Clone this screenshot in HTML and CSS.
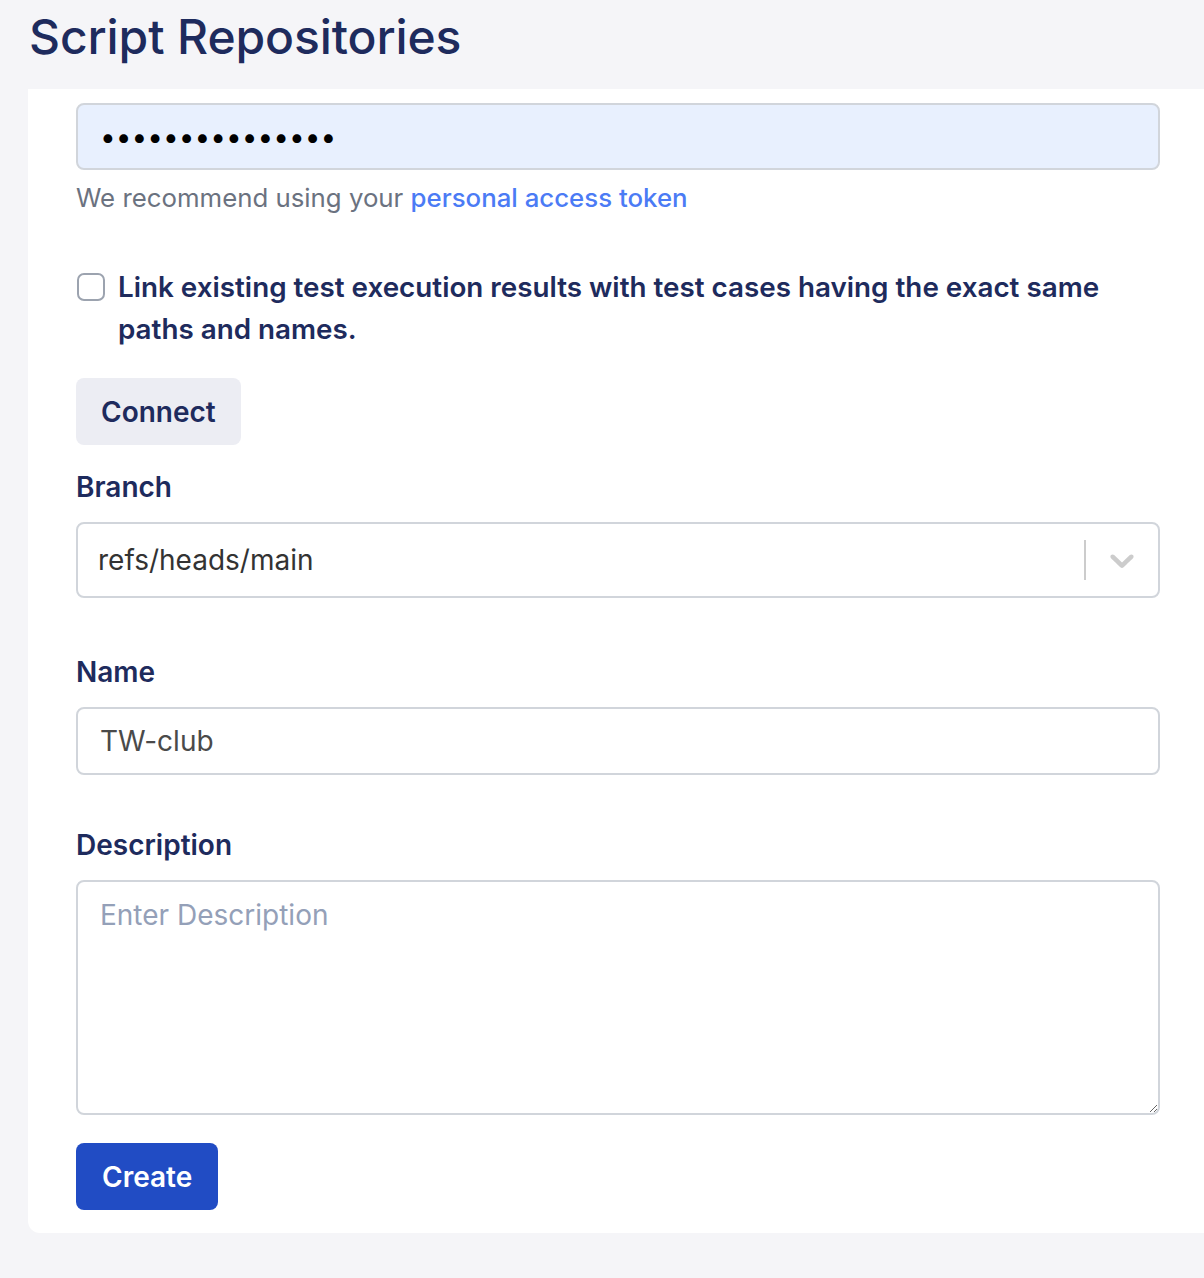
FILE: index.html
```html
<!DOCTYPE html>
<html lang="en">
<head>
<meta charset="utf-8">
<title>Script Repositories</title>
<link rel="stylesheet" href="styles.css">
</head>
<body>
<header class="page-header">
  <h1 class="page-title">Script Repositories</h1>
</header>
<main class="card">
  <form class="form">
    <input class="field field-autofill" type="password" value="abcdefghijklmno" aria-label="Token">
    <p class="helper">We recommend using your <a class="link" href="#">personal access token</a></p>

    <label class="check-row">
      <input class="check" type="checkbox">
      <span class="check-label">Link existing test execution results with test cases having the exact same paths and names.</span>
    </label>

    <button type="button" class="btn btn-secondary">Connect</button>

    <div class="label label-branch">Branch</div>
    <div class="select">
      <span class="select-value">refs/heads/main</span>
      <span class="select-sep"></span>
      <span class="select-indicator">
        <svg width="40" height="40" viewBox="0 0 20 20" aria-hidden="true"><path fill="#cccccc" d="M4.516 7.548c0.436-0.446 1.043-0.481 1.576 0l3.908 3.747 3.908-3.747c0.533-0.481 1.141-0.446 1.574 0 0.436 0.445 0.408 1.197 0 1.615-0.406 0.418-4.695 4.502-4.695 4.502-0.217 0.223-0.502 0.335-0.787 0.335s-0.57-0.112-0.789-0.335c0 0-4.287-4.084-4.695-4.502s-0.436-1.17 0-1.615z"/></svg>
      </span>
    </div>

    <div class="label label-name">Name</div>
    <input class="field field-text" type="text" value="TW-club" aria-label="Name">

    <div class="label label-desc">Description</div>
    <textarea class="field textarea" placeholder="Enter Description" aria-label="Description"></textarea>

    <button type="button" class="btn btn-primary">Create</button>
  </form>
</main>
</body>
</html>
```

FILE: styles.css
```css
html, body {
  margin: 0;
  padding: 0;
}
body {
  background: #f5f5f8;
  font-family: Inter, "Noto Sans", "Liberation Sans", sans-serif;
  overflow: hidden;
  min-height: 1278px;
}
.page-header {
  height: 89px;
  padding-left: 29px;
  box-sizing: border-box;
}
.page-title {
  margin: 0;
  padding-top: 8px;
  font-size: 48px;
  line-height: 58px;
  font-weight: 500;
  color: #1e2b5d;
  letter-spacing: -0.1px;
}
.card {
  margin-left: 28px;
  width: 1200px;
  background: #ffffff;
  border-radius: 0 0 12px 12px;
  padding: 14px 0 23px 48px;
  box-sizing: border-box;
}
.form {
  width: 1084px;
  display: flex;
  flex-direction: column;
  align-items: flex-start;
}
.field {
  width: 100%;
  box-sizing: border-box;
  border: 2px solid #d1d5db;
  border-radius: 8px;
  font-family: inherit;
  font-size: 28px;
  margin: 0;
  outline: none;
}
.field-autofill {
  height: 67px;
  background: #e8f0fe;
  padding: 0 22px;
  color: #000;
  font-size: 28px;
  letter-spacing: 0;
}
.helper {
  margin: 8px 0 0;
  font-size: 25.8px;
  line-height: 40px;
  color: #6b7280;
}
.link {
  color: #4b7bf5;
  text-decoration: none;
  font-weight: 500;
}
.check-row {
  margin-top: 48px;
  display: flex;
  align-items: flex-start;
  gap: 13px;
}
.check {
  appearance: none;
  -webkit-appearance: none;
  width: 28px;
  height: 28px;
  margin: 7px 0 0 1px;
  border: 2px solid #9ca3af;
  border-radius: 7px;
  background: #fff;
  flex: none;
  box-sizing: border-box;
}
.check-label {
  font-size: 27.8px;
  line-height: 42px;
  font-weight: 600;
  color: #1e2b5d;
}
.btn {
  border: none;
  border-radius: 8px;
  font-family: inherit;
  font-size: 28px;
  font-weight: 600;
  height: 67px;
  padding: 0 26px;
  cursor: pointer;
}
.btn-secondary {
  margin-top: 28px;
  background: #ecedf3;
  color: #1e2b5d;
  padding: 0 25px;
}
.btn-primary {
  margin-top: 28px;
  background: #214cc4;
  color: #ffffff;
  padding: 0 26px;
}
.label {
  font-size: 28px;
  line-height: 40px;
  font-weight: 600;
  color: #1e2b5d;
}
.label-branch { margin-top: 22px; }
.label-name { margin-top: 54px; }
.label-desc { margin-top: 50px; }
.select {
  margin-top: 15px;
  width: 100%;
  height: 76px;
  box-sizing: border-box;
  border: 2px solid #d1d5db;
  border-radius: 8px;
  display: flex;
  align-items: center;
  padding-left: 20px;
}
.select-value {
  flex: 1;
  font-size: 28px;
  color: #333333;
}
.select-sep {
  width: 2px;
  height: 40px;
  background: #cccccc;
}
.select-indicator {
  width: 72px;
  display: flex;
  justify-content: center;
  align-items: center;
}
.field-text {
  margin-top: 15px;
  height: 68px;
  padding: 0 22px;
  color: #4a4a4a;
  background: #fff;
}
.textarea {
  margin-top: 15px;
  height: 235px;
  padding: 16px 22px;
  resize: vertical;
  line-height: 34px;
  color: #333;
  display: block;
}
.textarea::placeholder {
  color: #94a0b8;
}
```
